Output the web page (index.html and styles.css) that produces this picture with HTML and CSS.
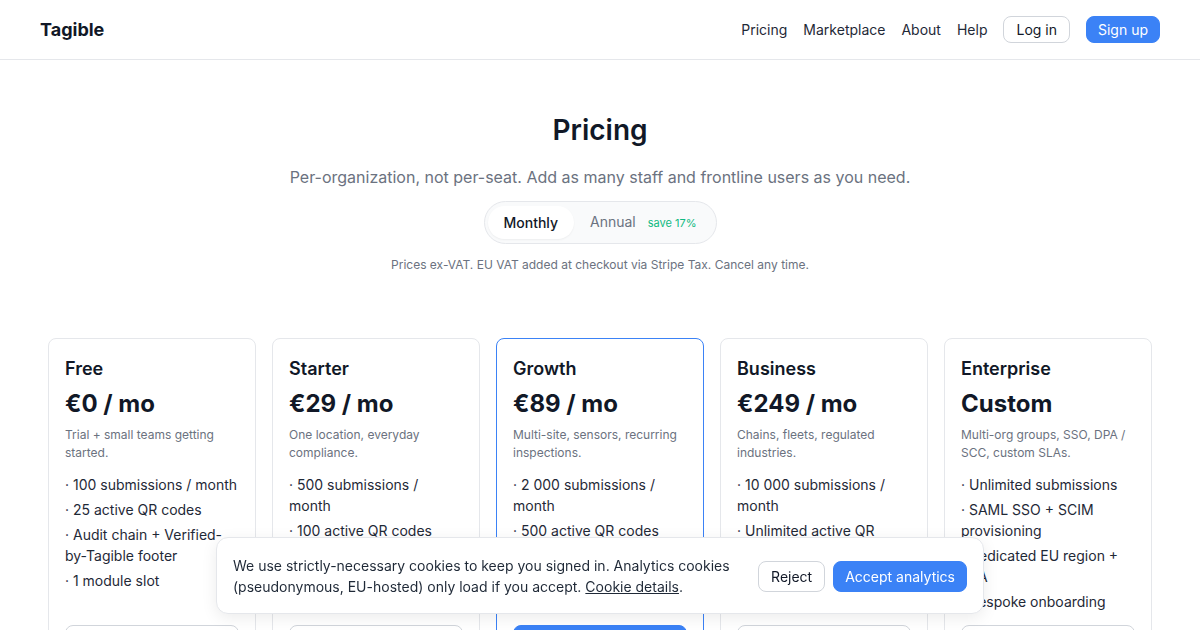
FILE: index.html
```html
<!DOCTYPE html>
<html lang="en">
<head>
    <meta charset="UTF-8">
    <meta name="viewport" content="width=device-width, initial-scale=1.0">
    <title>Pricing - Tagible</title>
    <link rel="stylesheet" href="styles.css">
</head>
<body>
    <header class="topbar">
        <a class="logo" href="#">Tagible</a>
        <nav class="nav">
            <a href="#">Pricing</a>
            <a href="#">Marketplace</a>
            <a href="#">About</a>
            <a href="#">Help</a>
            <a class="btn-outline login" href="#">Log in</a>
            <a class="btn-primary" href="#">Sign up</a>
        </nav>
    </header>

    <main class="page">
        <h1>Pricing</h1>
        <p class="lead">Per-organization, not per-seat. Add as many staff and frontline users as you need.</p>

        <div class="toggle">
            <button class="toggle-opt active">Monthly</button>
            <button class="toggle-opt">Annual <span class="save">save 17%</span></button>
        </div>

        <p class="note">Prices ex-VAT. EU VAT added at checkout via Stripe Tax. Cancel any time.</p>

        <section class="plans">
            <div class="plan">
                <h2>Free</h2>
                <div class="price">€0 / mo</div>
                <p class="desc">Trial + small teams getting started.</p>
                <ul class="features">
                    <li>· 100 submissions / month</li>
                    <li>· 25 active QR codes</li>
                    <li>· Audit chain + Verified-by-Tagible footer</li>
                    <li>· 1 module slot</li>
                </ul>
                <a class="plan-btn" href="#">Start free</a>
            </div>

            <div class="plan">
                <h2>Starter</h2>
                <div class="price">€29 / mo</div>
                <p class="desc">One location, everyday compliance.</p>
                <ul class="features">
                    <li>· 500 submissions / month</li>
                    <li>· 100 active QR codes</li>
                    <li>· 3 module slots</li>
                    <li>· Email support</li>
                </ul>
                <a class="plan-btn" href="#">Choose Starter</a>
            </div>

            <div class="plan featured">
                <h2>Growth</h2>
                <div class="price">€89 / mo</div>
                <p class="desc">Multi-site, sensors, recurring inspections.</p>
                <ul class="features">
                    <li>· 2 000 submissions / month</li>
                    <li>· 500 active QR codes</li>
                    <li>· Sensor integrations</li>
                    <li>· Priority support</li>
                </ul>
                <a class="plan-btn primary" href="#">Choose Growth</a>
            </div>

            <div class="plan">
                <h2>Business</h2>
                <div class="price">€249 / mo</div>
                <p class="desc">Chains, fleets, regulated industries.</p>
                <ul class="features">
                    <li>· 10 000 submissions / month</li>
                    <li>· Unlimited active QR codes</li>
                    <li>· Audit exports</li>
                    <li>· Phone support</li>
                </ul>
                <a class="plan-btn" href="#">Choose Business</a>
            </div>

            <div class="plan">
                <h2>Enterprise</h2>
                <div class="price">Custom</div>
                <p class="desc">Multi-org groups, SSO, DPA / SCC, custom SLAs.</p>
                <ul class="features">
                    <li>· Unlimited submissions</li>
                    <li>· SAML SSO + SCIM provisioning</li>
                    <li>· Dedicated EU region + SLA</li>
                    <li>· Bespoke onboarding</li>
                </ul>
                <a class="plan-btn" href="#">Contact sales</a>
            </div>
        </section>
    </main>

    <div class="cookie">
        <p>We use strictly-necessary cookies to keep you signed in. Analytics cookies (pseudonymous, EU-hosted) only load if you accept. <a href="#">Cookie details</a>.</p>
        <div class="cookie-actions">
            <button class="btn-outline big reject">Reject</button>
            <button class="btn-primary big">Accept analytics</button>
        </div>
    </div>
</body>
</html>
```

FILE: styles.css
```css
* {
    box-sizing: border-box;
}

body {
    margin: 0;
    font-family: Inter, "Noto Sans", sans-serif;
    color: #111827;
    background: #fff;
}

a {
    color: inherit;
    text-decoration: none;
}

.topbar {
    height: 60px;
    display: flex;
    align-items: center;
    justify-content: space-between;
    padding: 0 40px;
    border-bottom: 1px solid #e5e7eb;
}

.logo {
    font-size: 18px;
    font-weight: 700;
    color: #111827;
}

.nav {
    display: flex;
    align-items: center;
    gap: 16px;
    font-size: 14px;
    color: #1f2937;
}

.btn-outline,
.btn-primary {
    font-family: inherit;
    font-size: 14px;
    border-radius: 8px;
    padding: 4px 11px;
    line-height: 17px;
    cursor: pointer;
}

.btn-outline {
    border: 1px solid #d1d5db;
    background: #fff;
    color: #111827;
}

.btn-outline.login {
    padding: 4px 12px;
}

.btn-primary {
    border: 1px solid #3b82f6;
    background: #3b82f6;
    color: #fff;
}

.btn-outline.big,
.btn-primary.big {
    padding: 6px 11px;
    font-size: 14px;
}

.btn-outline.reject {
    padding: 6px 12px;
}

.page {
    padding: 52px 48px 120px;
    text-align: center;
}

h1 {
    margin: 0;
    font-size: 28px;
    line-height: 36px;
    font-weight: 600;
    color: #111827;
}

.lead {
    margin: 17px 0 0;
    font-size: 16px;
    line-height: 24px;
    color: #6b7280;
}

.toggle {
    display: inline-flex;
    align-items: center;
    margin-top: 12px;
    padding: 3px;
    border: 1px solid #e5e7eb;
    background: #f9fafb;
    border-radius: 999px;
}

.toggle-opt {
    border: none;
    background: transparent;
    font-family: inherit;
    font-size: 14px;
    line-height: 17px;
    padding: 8px 16px;
    border-radius: 999px;
    color: #6b7280;
}

.toggle-opt.active {
    background: #fff;
    color: #111827;
    font-weight: 500;
    box-shadow: 0 1px 2px rgba(0, 0, 0, 0.05);
}

.save {
    font-size: 11px;
    color: #10b981;
    margin-left: 8px;
}

.note {
    margin: 12px 0 0;
    font-size: 12px;
    line-height: 18px;
    color: #6b7280;
}

.plans {
    margin-top: 64px;
    display: grid;
    grid-template-columns: repeat(5, 1fr);
    gap: 16px;
    text-align: left;
}

.plan {
    display: flex;
    flex-direction: column;
    border: 1px solid #e5e7eb;
    border-radius: 8px;
    padding: 16px;
}

.plan.featured {
    border-color: #3b82f6;
}

.plan h2 {
    margin: 0;
    font-size: 18px;
    line-height: 27px;
    font-weight: 600;
}

.price {
    margin-top: 6px;
    font-size: 24px;
    line-height: 32px;
    font-weight: 700;
}

.desc {
    margin: 6px 0 0;
    font-size: 12px;
    line-height: 18px;
    color: #6b7280;
}

.features {
    list-style: none;
    margin: 12px 0 9px;
    padding: 0;
    flex-grow: 1;
    font-size: 14px;
    line-height: 21px;
    color: #1f2937;
}

.features li {
    margin-bottom: 4px;
}

.plan-btn {
    display: block;
    text-align: center;
    font-size: 14px;
    padding: 8px;
    border: 1px solid #d1d5db;
    border-radius: 8px;
}

.plan-btn.primary {
    background: #3b82f6;
    border-color: #3b82f6;
    color: #fff;
}

.cookie {
    position: fixed;
    left: 50%;
    bottom: 16px;
    transform: translateX(-50%);
    width: 768px;
    display: flex;
    align-items: center;
    gap: 24px;
    padding: 17px 16px 16px;
    background: #fff;
    border: 1px solid #e5e7eb;
    border-radius: 12px;
    box-shadow: 0 4px 16px rgba(0, 0, 0, 0.08);
}

.cookie p {
    margin: 0;
    flex: 1;
    font-size: 14px;
    line-height: 21px;
    color: #1f2937;
}

.cookie p a {
    text-decoration: underline;
}

.cookie-actions {
    display: flex;
    gap: 8px;
    flex-shrink: 0;
}
```
